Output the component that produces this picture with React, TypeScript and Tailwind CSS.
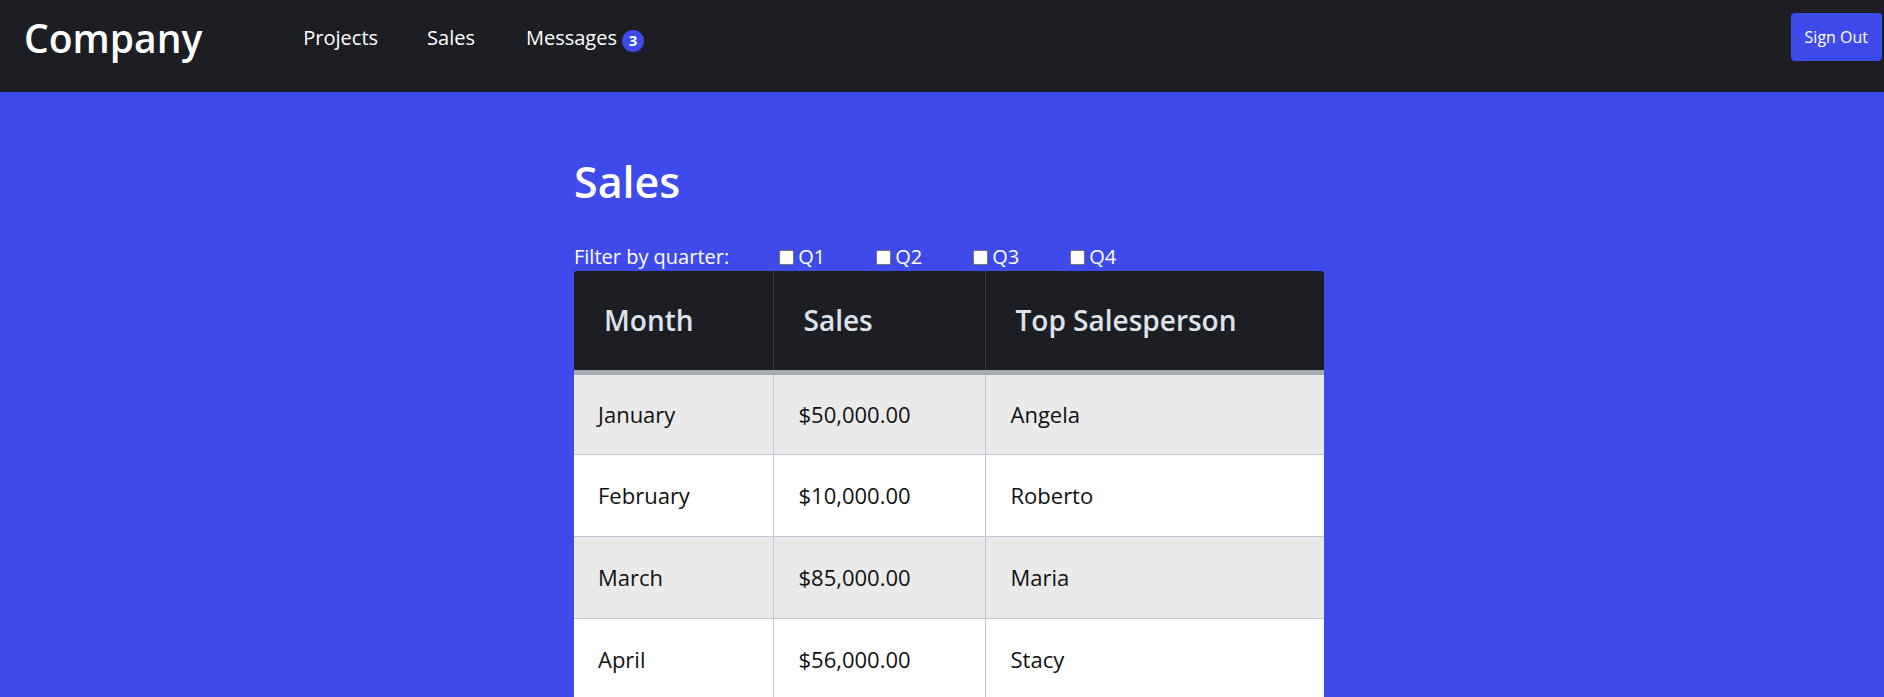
const rows = [
  { month: 'January', sales: '$50,000.00', person: 'Angela' },
  { month: 'February', sales: '$10,000.00', person: 'Roberto' },
  { month: 'March', sales: '$85,000.00', person: 'Maria' },
  { month: 'April', sales: '$56,000.00', person: 'Stacy' },
]

export default function App() {
  return (
    <div className="min-h-screen bg-[#3f4aeb] font-['Open_Sans',sans-serif]">
      {/* Navbar */}
      <nav className="h-[92px] bg-[#1c1e24]">
        <div className="flex h-[74px] items-center pl-[24px] pr-[2px]">
          <span className="text-[39px] font-semibold text-white leading-none">Company</span>
          <ul className="ml-[101px] mt-[2px] flex items-center gap-[49px] text-[20px] text-white">
            <li>Projects</li>
            <li>Sales</li>
            <li className="ml-[2px] flex items-center gap-[5px]">
              Messages
              <span className="mt-[5px] flex h-[22px] w-[22px] items-center justify-center rounded-full bg-[#3f4aeb] text-[15px] font-bold">
                3
              </span>
            </li>
          </ul>
          <button className="ml-auto h-[48px] rounded-[4px] bg-[#3f4aeb] px-[14px] text-[16px] text-white">
            Sign Out
          </button>
        </div>
      </nav>

      {/* Content */}
      <main className="mx-auto w-[764px] pl-[14px]">
        <h1 className="pt-[60px] text-[43px] font-semibold leading-[60px] text-white">Sales</h1>

        <div className="mt-[33px] flex items-center text-[20px] leading-[24px] text-white">
          <span>Filter by quarter:</span>
          {['Q1', 'Q2', 'Q3', 'Q4'].map((q, i) => (
            <label key={q} className={`flex items-center ${i === 0 ? 'ml-[50px]' : 'ml-[51px]'}`}>
              <span className="mr-[4px] h-[15px] w-[15px] rounded-[2px] border border-[#767676] bg-white" />
              {q}
            </label>
          ))}
        </div>

        <table className="mt-[2px] w-[750px] border-collapse overflow-hidden rounded-t-[3px] text-left">
          <thead>
            <tr className="h-[101px] border-b-[5px] border-[#a2aab2] bg-[#1c1e24] text-[28px] font-semibold text-[#dde3ec]">
              <th className="w-[199px] pl-[30px] font-semibold">Month</th>
              <th className="w-[212px] border-l border-[#3a3d45] pl-[30px] font-semibold">Sales</th>
              <th className="border-l border-[#3a3d45] pl-[30px] font-semibold">Top Salesperson</th>
            </tr>
          </thead>
          <tbody className="text-[22px] text-[#111111]">
            {rows.map((r, i) => (
              <tr
                key={r.month}
                className={`h-[82px] border-b border-[#c4c4d6] ${i % 2 === 0 ? 'bg-[#eaeaea]' : 'bg-white'}`}
              >
                <td className="pl-[24px]">{r.month}</td>
                <td className="border-l border-[#c4c4d6] pl-[25px]">{r.sales}</td>
                <td className="border-l border-[#c4c4d6] pl-[25px]">{r.person}</td>
              </tr>
            ))}
          </tbody>
        </table>
      </main>
    </div>
  )
}
